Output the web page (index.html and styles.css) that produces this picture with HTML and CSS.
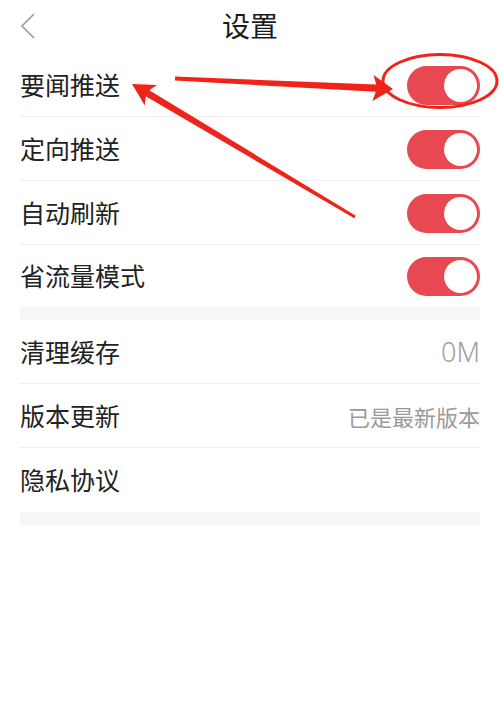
FILE: index.html
```html
<!DOCTYPE html>
<html>
<head>
  <meta charset="utf-8">
  <title>设置</title>
  <link rel="stylesheet" href="styles.css">
</head>
<body>
  <div class="page">
    <div class="topbar">
      <svg class="back" width="16" height="26" viewBox="0 0 16 26">
        <polyline points="14,1 2,13 14,25" fill="none" stroke="#9a9a9a" stroke-width="1.6"/>
      </svg>
      <span class="title">设置</span>
    </div>

    <div class="group first">
      <div class="row"><span class="label">要闻推送</span><i class="switch on"></i></div>
      <div class="row"><span class="label">定向推送</span><i class="switch on"></i></div>
      <div class="row"><span class="label">自动刷新</span><i class="switch on"></i></div>
      <div class="row"><span class="label">省流量模式</span><i class="switch on"></i></div>
    </div>
    <div class="gap"></div>
    <div class="group">
      <div class="row"><span class="label">清理缓存</span><span class="value big">0M</span></div>
      <div class="row"><span class="label">版本更新</span><span class="value">已是最新版本</span></div>
      <div class="row"><span class="label">隐私协议</span></div>
    </div>
    <div class="gap"></div>

    <!-- red markup drawn on top of the screenshot -->
    <svg class="marks" width="500" height="724" viewBox="0 0 500 724">
      <ellipse cx="440" cy="81" rx="57" ry="26.5" fill="none" stroke="#f0231a" stroke-width="3"/>
      <polygon fill="#f0231a" points="393,89 373.6,75 376.2,84.5 175.1,76.5 174.9,80.5 375.8,91.8 372.4,101"/>
      <polygon fill="#f0231a" points="132,84 157,85 149.3,90.3 355.8,215.7 354.2,218.3 145.7,96.3 144.8,105.6"/>
    </svg>
  </div>
</body>
</html>
```

FILE: styles.css
```css
body {
  margin: 0;
  background: #ffffff;
  color: #222222;
  font-family: "Noto Sans CJK SC", "Noto Sans", sans-serif;
}
.page {
  position: relative;
  width: 500px;
  height: 724px;
  overflow: hidden;
}
.topbar {
  height: 53px;
  display: flex;
  align-items: center;
  justify-content: center;
  position: relative;
}
.back {
  position: absolute;
  left: 20px;
  top: 13px;
}
.title {
  font-size: 28px;
  line-height: 1;
  margin-top: -4px;
  color: #1a1a1a;
}
.group {
  margin: 0 20px;
}
.row {
  height: 63px;
  border-bottom: 1px solid #efefef;
  display: flex;
  align-items: center;
  justify-content: space-between;
}
.row:last-child {
  border-bottom: none;
  height: 64px;
}
.group.first .row:last-child {
  height: 62px;
}
.label {
  font-size: 25px;
  line-height: 1;
  margin-top: -1px;
}
.value {
  font-size: 22px;
  color: #9a9a9a;
  line-height: 1;
}
.value.big {
  font-size: 27px;
  font-family: "Noto Sans", sans-serif;
  font-weight: 300;
  color: #a0a0a0;
}
.switch {
  width: 73px;
  height: 39px;
  border-radius: 20px;
  background: #e8484f;
  position: relative;
  box-sizing: border-box;
  margin-top: 1px;
}
.switch.on::after {
  content: "";
  position: absolute;
  right: 3px;
  top: 3px;
  width: 33px;
  height: 33px;
  border-radius: 50%;
  background: #ffffff;
}
.gap {
  height: 13px;
  margin: 0 20px;
  background: #f6f6f6;
}
.marks {
  position: absolute;
  left: 0;
  top: 0;
  pointer-events: none;
}
```
